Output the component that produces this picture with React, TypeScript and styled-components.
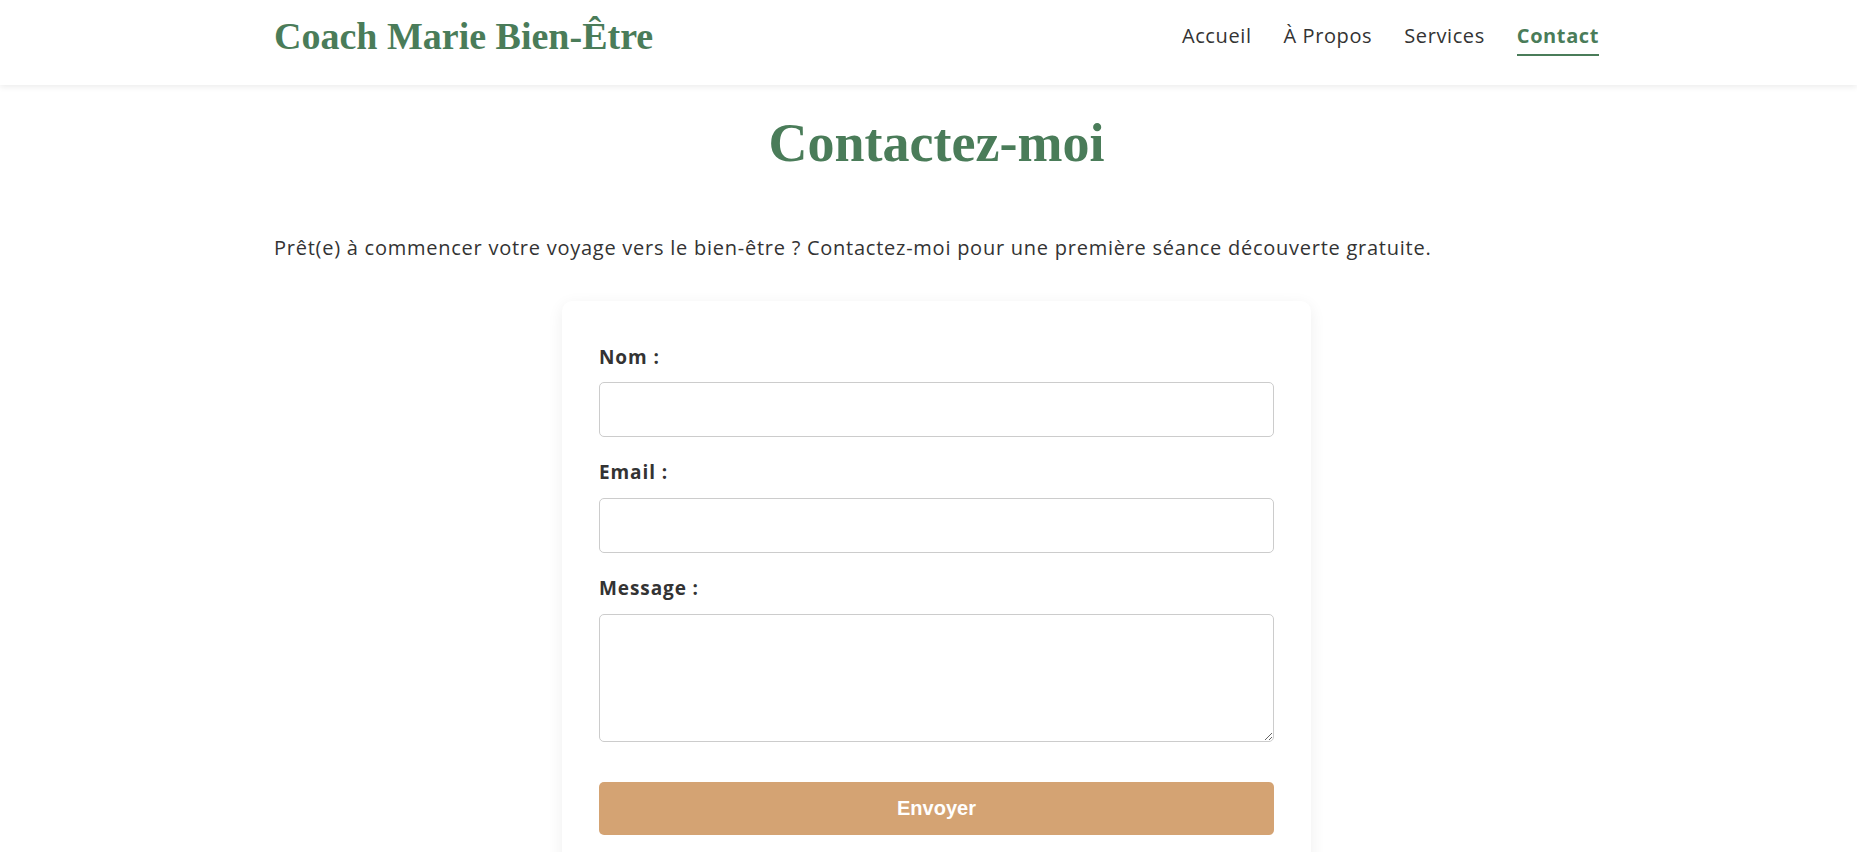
import React from "react";
import styled, { createGlobalStyle } from "styled-components";

const GlobalStyle = createGlobalStyle`
  html, body {
    margin: 0;
    padding: 0;
    background: #ffffff;
  }
  body {
    font-family: "Open Sans", "Liberation Sans", sans-serif;
    color: #333333;
  }
  * { box-sizing: border-box; }
`;

const GREEN = "#4a7c59";

const Container = styled.div`
  box-sizing: content-box;
  width: 1325px;
  margin: 0 auto;
  padding-left: 16px;
`;

const Header = styled.header`
  height: 85px;
  background: #ffffff;
  box-shadow: 0 2px 6px rgba(0, 0, 0, 0.08);
`;

const HeaderInner = styled(Container)`
  height: 100%;
  display: flex;
  align-items: center;
  justify-content: space-between;
`;

const Logo = styled.div`
  font-family: "Liberation Serif", "DejaVu Serif", serif;
  font-weight: 700;
  font-size: 38px;
  line-height: 1;
  color: ${GREEN};
  margin-top: -13px;
`;

const Nav = styled.nav`
  display: flex;
  gap: 32px;
  margin-top: -6px;
`;

const NavLink = styled.a<{ $active?: boolean }>`
  font-size: 20px;
  letter-spacing: 0.6px;
  line-height: 1.2;
  text-decoration: none;
  color: ${(p) => (p.$active ? GREEN : "#333333")};
  font-weight: ${(p) => (p.$active ? 700 : 400)};
  padding-bottom: 6px;
  border-bottom: 2px solid ${(p) => (p.$active ? GREEN : "transparent")};
  cursor: pointer;
`;

const Main = styled(Container)`
  padding-top: 26px;
`;

const Title = styled.h1`
  margin: 0;
  font-family: "Liberation Serif", "DejaVu Serif", serif;
  font-weight: 700;
  font-size: 54px;
  line-height: 1.2;
  color: ${GREEN};
  text-align: center;
`;

const Intro = styled.p`
  margin: 57px 0 38px;
  font-size: 20px;
  letter-spacing: 0.75px;
  line-height: 1.5;
  color: #333333;
`;

const Card = styled.form`
  width: 749px;
  margin: 0 auto;
  padding: 44px 37px 40px;
  background: #ffffff;
  border-radius: 10px;
  box-shadow: 0 4px 16px rgba(0, 0, 0, 0.07);
`;

const Group = styled.div`
  margin-bottom: 23px;
`;

const Label = styled.label`
  display: block;
  font-size: 19px;
  letter-spacing: 0.9px;
  font-weight: 700;
  line-height: 1.3;
  color: #333333;
  margin-bottom: 13px;
`;

const Input = styled.input`
  display: block;
  width: 100%;
  height: 55px;
  padding: 0 16px;
  border: 1px solid #cccccc;
  border-radius: 5px;
  font-size: 17px;
  font-family: inherit;
  background: #ffffff;
`;

const TextArea = styled.textarea`
  display: block;
  width: 100%;
  height: 128px;
  padding: 16px;
  border: 1px solid #cccccc;
  border-radius: 5px;
  font-size: 17px;
  font-family: inherit;
  background: #ffffff;
`;

const SubmitButton = styled.button`
  display: block;
  width: 100%;
  height: 53px;
  margin-top: 40px;
  border: none;
  border-radius: 5px;
  background: #d4a373;
  color: #ffffff;
  font-family: "Liberation Sans", Arial, sans-serif;
  font-weight: 700;
  font-size: 20px;
  cursor: pointer;
`;

export default function App() {
  return (
    <>
      <GlobalStyle />
      <Header>
        <HeaderInner>
          <Logo>Coach Marie Bien-Être</Logo>
          <Nav>
            <NavLink>Accueil</NavLink>
            <NavLink>À Propos</NavLink>
            <NavLink>Services</NavLink>
            <NavLink $active>Contact</NavLink>
          </Nav>
        </HeaderInner>
      </Header>
      <Main>
        <Title>Contactez-moi</Title>
        <Intro>
          Prêt(e) à commencer votre voyage vers le bien-être ? Contactez-moi pour une première séance découverte gratuite.
        </Intro>
        <Card onSubmit={(e) => e.preventDefault()}>
          <Group>
            <Label htmlFor="nom">Nom :</Label>
            <Input id="nom" type="text" />
          </Group>
          <Group>
            <Label htmlFor="email">Email :</Label>
            <Input id="email" type="email" />
          </Group>
          <Group>
            <Label htmlFor="message">Message :</Label>
            <TextArea id="message" />
          </Group>
          <SubmitButton type="submit">Envoyer</SubmitButton>
        </Card>
      </Main>
    </>
  );
}
